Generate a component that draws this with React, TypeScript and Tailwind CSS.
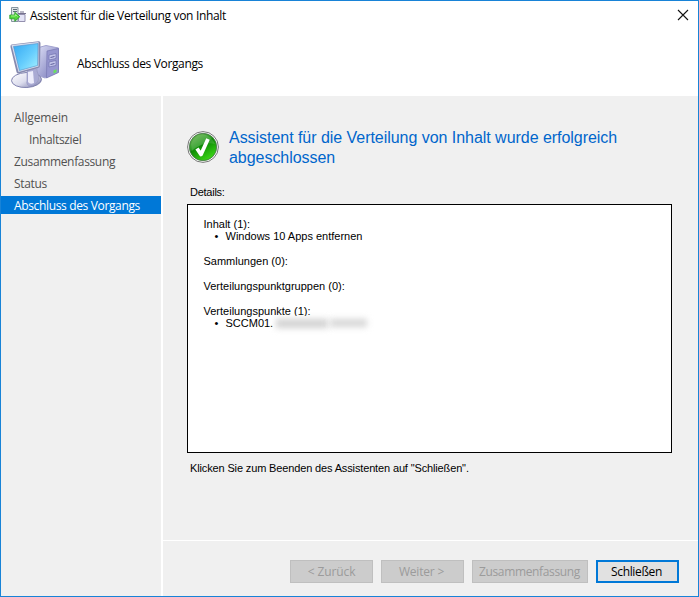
import React from "react";

function WizardIcon() {
  return (
    <svg width="18" height="18" viewBox="0 0 18 18">
      <path d="M2.500 1.500h6.500v14H2.500z" fill="#dfe5e8" stroke="#8796a0" />
      <path d="M4 3.500h4M4 5.500h4" stroke="#5f6f78" />
      <path d="M9.500 8.500h6.500v7H9.500z" fill="#e4e4f6" stroke="#9490ae" />
      <path d="M9 7.500h8M11 6h4" stroke="#77738f" />
      <path d="M.8 9h5V6.300l5 4.500-5 4.500v-2.500h-5z" fill="#54d83d" stroke="#239b22" strokeWidth=".8" />
      <path d="M2 10h4.500V8.500l2 2" fill="none" stroke="#a0f285" />
    </svg>
  );
}

function ComputerIcon() {
  return (
    <svg width="52" height="52" viewBox="0 0 52 52">
      <defs>
        <linearGradient id="screen" x1="0" y1="0" x2="1" y2="1">
          <stop stopColor="#35a9f2" /><stop offset=".55" stopColor="#66cdfd" /><stop offset="1" stopColor="#a5f1ff" />
        </linearGradient>
        <linearGradient id="tower" x1="0" y1="0" x2="1" y2="1">
          <stop stopColor="#dddff6" /><stop offset="1" stopColor="#7172b5" />
        </linearGradient>
        <linearGradient id="base" x1="0" y1="0" x2="1" y2="1">
          <stop stopColor="#ffffff" /><stop offset=".5" stopColor="#dcdded" /><stop offset="1" stopColor="#7476a7" />
        </linearGradient>
      </defs>
      <path d="M27 8 36 5.500l12.500 2.500v24L35 38l-8-3z" fill="url(#tower)" stroke="#a2a3d0" />
      <path d="M37 11 48.500 8.500v24L36.500 38z" fill="#9696cf" stroke="#7777b1" strokeWidth=".7" />
      <path d="m39 15 7-1.500v5L39 20zm0 7 7-1.500v5L39 27z" fill="#c3c4e9" stroke="#7778b4" strokeWidth=".8" />
      <path d="m40.500 17.500 4-1m-4 8 4-1" stroke="#5d5e9c" />
      <path d="m43.500 30.500 3-1.200v3l-3 1.200z" fill="#69e25e" />
      <ellipse cx="16.500" cy="40" rx="15" ry="7.500" fill="url(#base)" stroke="#7779a9" strokeWidth=".9" transform="rotate(-3 16.500 40)" />
      <path d="m17 31 9-3 3 9q-1 8-9 9-4-1-3-5z" fill="#a9aad3" stroke="#9293bd" strokeWidth=".6" />
      <path d="m18 32 5-1 1 12q-4 2-6-1z" fill="#ededfb" />
      <path d="M1.500 4.500 28.500 1.200q2-.2 2 2L30 25.500q0 2-2 2.500L9 33.500q-2 .5-2.500-1.500L.5 7q-.4-2 1-2.500z" fill="#878aaf" />
      <path d="M1.500 5 28.500 2 28.500 26.500 8.500 32z" fill="#d8dded" />
      <path d="m3.500 6.500 24.500-3-.5 22L9.500 30.500z" fill="url(#screen)" stroke="#4f91cb" strokeWidth=".6" />
    </svg>
  );
}

function SuccessIcon() {
  return (
    <svg width="34" height="34" viewBox="0 0 34 34">
      <defs>
        <linearGradient id="success" x1="0" y1="0" x2=".6" y2="1">
          <stop stopColor="#78b85d" /><stop offset=".48" stopColor="#279b1f" /><stop offset=".52" stopColor="#0d8a05" /><stop offset="1" stopColor="#39d414" />
        </linearGradient>
      </defs>
      <circle cx="17" cy="17" r="15.400" fill="#fff" stroke="#777" />
      <circle cx="17" cy="17" r="13.700" fill="url(#success)" stroke="#48704a" strokeWidth=".8" />
      <path d="M5 14Q9 4 17 4.500T29 14Q17 11 6 21z" fill="#fff" opacity=".13" />
      <path d="m11 18.500 4 6L22 9" fill="none" stroke="#fff" strokeWidth="3.800" strokeLinejoin="round" />
    </svg>
  );
}

export default function App() {
  return (
    <div className="flex h-[597px] w-[699px] flex-col overflow-hidden border border-[#1883d7] bg-white font-['Open_Sans','Noto_Sans',sans-serif] text-[12px] leading-4 whitespace-nowrap text-black">
      <header className="flex h-[95px] shrink-0 flex-col">
        <div className="flex h-8 items-start pl-[8px]">
          <div className="mt-[5px]"><WizardIcon /></div>
          <h1 className="mt-[7px] ml-[3px] tracking-[-0.34px]">Assistent für die Verteilung von Inhalt</h1>
          <svg className="mt-[8px] mr-[9px] ml-auto" width="12" height="12" viewBox="0 0 12 12"><path d="m1 1 10 10M11 1 1 11" stroke="#111" strokeWidth="1.100" /></svg>
        </div>
        <div className="flex items-start pl-[9px]">
          <div className="mt-[7px]"><ComputerIcon /></div>
          <h2 className="mt-[23px] ml-[15px] tracking-[-0.35px]">Abschluss des Vorgangs</h2>
        </div>
      </header>
      <div className="flex min-h-0 flex-1">
        <nav className="w-[160px] shrink-0 bg-[#f0f0f0] pt-[12px] tracking-[-0.35px] text-[#505050]">
          <div className="mb-[4px] h-[18px] pl-[13px] leading-[20px] tracking-[-0.12px]">Allgemein</div>
          <div className="mb-[4px] h-[18px] pl-[28px] leading-[20px]">Inhaltsziel</div>
          <div className="mb-[4px] h-[18px] pl-[13px] leading-[20px]">Zusammenfassung</div>
          <div className="mb-[4px] h-[18px] pl-[13px] leading-[20px]">Status</div>
          <div className="h-[18px] bg-[#0078d7] pl-[13px] leading-[20px] text-white">Abschluss des Vorgangs</div>
        </nav>
        <div className="ml-[2px] flex min-w-0 flex-1 flex-col bg-[#f0f0f0]">
          <main className="flex h-[444px] flex-col pl-[24px] font-['Liberation_Sans',Arial,sans-serif] text-[11px]">
            <div className="mt-[32px] flex h-[43px] gap-[9px]">
              <div className="-ml-px pt-[2px]"><SuccessIcon /></div>
              <h3 className="text-[16px] leading-5 tracking-[-0.04px] text-[#0066cc]">Assistent für die Verteilung von Inhalt wurde erfolgreich<br />abgeschlossen</h3>
            </div>
            <div className="mt-[13px] ml-[3px] h-[20px] tracking-[-0.25px]">Details:</div>
            <section className="h-[249px] w-[485px] border border-black bg-white pt-[13px] pl-[15.5px] leading-3">
              <div className="mb-[13px]">Inhalt (1):<div className="flex pl-[11px]"><span className="w-[11px]">•</span>Windows 10 Apps entfernen</div></div>
              <div className="mb-[13px]">Sammlungen (0):</div>
              <div className="mb-[13px]">Verteilungspunktgruppen (0):</div>
              <div>Verteilungspunkte (1):<div className="flex pl-[11px]"><span className="w-[11px]">•</span><span>SCCM01.</span><span className="-mt-px flex h-[14px] w-[101px] items-center bg-white pl-[3px]"><span className="h-[9px] w-[52px] bg-[#d2d2d2] blur-[3px]" /><span className="ml-[2px] h-[8px] w-[37px] bg-[#d6d6d6] blur-[3px]" /></span></div></div>
            </section>
            <p className="mt-[7px] ml-[3px] tracking-[-0.14px]">Klicken Sie zum Beenden des Assistenten auf "Schließen".</p>
          </main>
          <footer className="flex flex-1 justify-end gap-2 border-t border-white pt-[19px] pr-[19px] text-[12px] text-[#9b9b9b]">
            <button className="h-[23px] w-[83px] border border-[#bfbfbf] bg-[#ccc] tracking-[-0.1px]">&lt; Zurück</button>
            <button className="h-[23px] w-[83px] border border-[#bfbfbf] bg-[#ccc] pr-[2px] tracking-[-0.2px]">Weiter &gt;</button>
            <button className="h-[23px] w-[116px] border border-[#bfbfbf] bg-[#ccc] pr-px tracking-[-0.35px]">Zusammenfassung</button>
            <button className="h-[23px] w-[83px] border-2 border-[#0078d7] bg-[#e1e1e1] pr-[2px] leading-[19px] tracking-[-0.35px] text-black">Schließen</button>
          </footer>
        </div>
      </div>
    </div>
  );
}
